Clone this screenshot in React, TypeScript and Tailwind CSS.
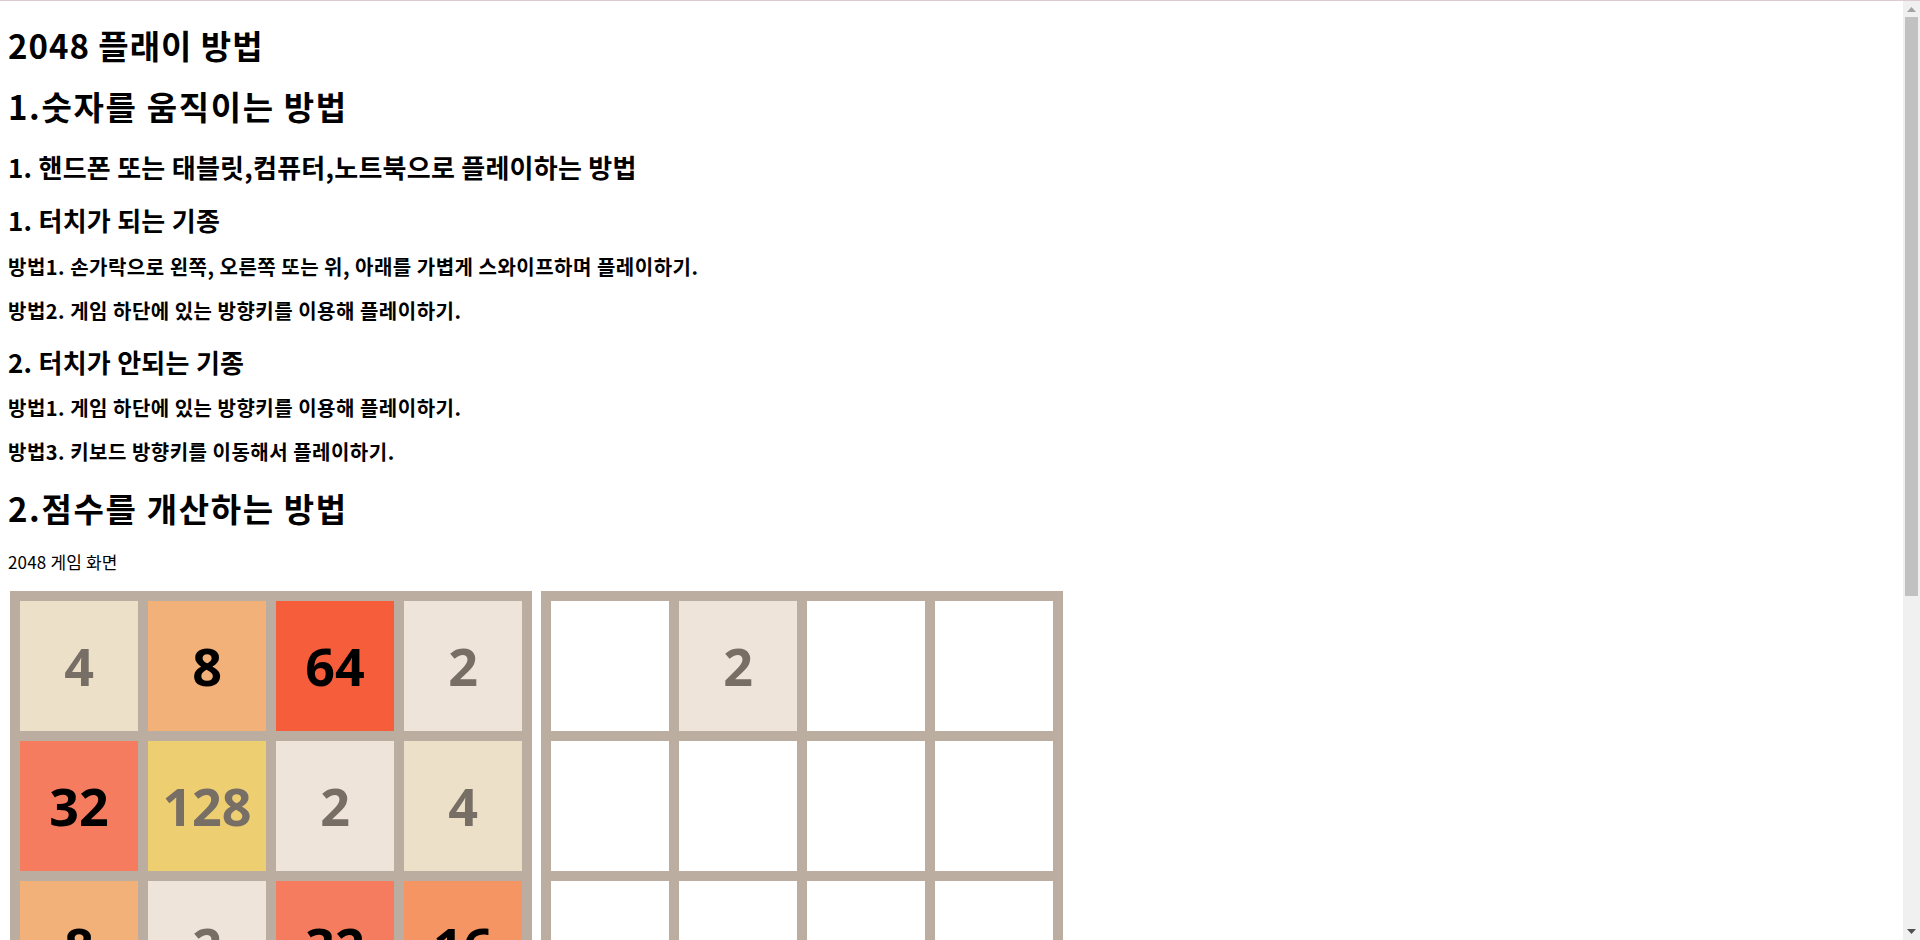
const board1 = [
  [4, 8, 64, 2],
  [32, 128, 2, 4],
  [8, 2, 32, 16],
  [2, 4, 8, 2],
];

const board2 = [
  [0, 2, 0, 0],
  [0, 0, 0, 0],
  [0, 0, 0, 0],
  [0, 0, 0, 0],
];

const tileStyles: Record<number, string> = {
  0: 'bg-white',
  2: 'bg-[#eee4da] text-[#776e65]',
  4: 'bg-[#ede0c8] text-[#776e65]',
  8: 'bg-[#f2b179] text-black',
  16: 'bg-[#f59563] text-black',
  32: 'bg-[#f67c5f] text-black',
  64: 'bg-[#f65e3b] text-black',
  128: 'bg-[#edcf72] text-[#776e65]',
};

function Board({ cells }: { cells: number[][] }) {
  return (
    <div className="grid grid-cols-[repeat(4,118px)] grid-rows-[repeat(4,130px)] gap-[10px] bg-[#bbada0] p-[10px]">
      {cells.flat().map((v, i) => (
        <div
          key={i}
          className={`flex items-center justify-center font-['Open_Sans',sans-serif] text-[52px] font-bold ${tileStyles[v]}`}
        >
          {v > 0 ? v : ''}
        </div>
      ))}
    </div>
  );
}

// classic window scrollbar, page scrolled to the top
function Scrollbar() {
  return (
    <div className="fixed right-0 top-0 flex h-screen w-[17px] flex-col border-t border-[#dccbd3] bg-[#f0f0f0]">
      <div className="flex h-[16px] items-center justify-center">
        <svg width="9" height="5" viewBox="0 0 9 5">
          <path d="M4.5 0 L9 5 H0 Z" fill="#a3a3a3" />
        </svg>
      </div>
      <div className="flex-1 px-[2px]">
        <div className="h-[579px] bg-[#c1c1c1]" />
      </div>
      <div className="flex h-[17px] items-center justify-center">
        <svg width="9" height="5" viewBox="0 0 9 5">
          <path d="M0 0 H9 L4.5 5 Z" fill="#505050" />
        </svg>
      </div>
    </div>
  );
}

export default function App() {
  return (
    <div className="min-h-[1471px] border-t border-[#dccbd3] bg-white">
      <div className="flex flex-col px-2 font-['Noto_Sans_CJK_KR',sans-serif] text-black">
        <h1 className="mt-[24px] text-[33px] font-bold leading-[40px] tracking-[0.03em]">2048 플래이 방법</h1>
        <h1 className="mt-[21px] text-[33px] font-bold leading-[40px] tracking-[0.05em]">1.숫자를 움직이는 방법</h1>
        <h2 className="mt-[25px] text-[26px] font-bold leading-[32px] tracking-[0.01em]">
          1. 핸드폰 또는 태블릿,컴퓨터,노트북으로 플레이하는 방법
        </h2>
        <h2 className="mt-[21px] text-[26px] font-bold leading-[32px] tracking-[0.01em]">1. 터치가 되는 기종</h2>
        <p className="mt-[18px] text-[20px] font-bold leading-[26px] tracking-[0.025em]">
          방법1. 손가락으로 왼쪽, 오른쪽 또는 위, 아래를 가볍게 스와이프하며 플레이하기.
        </p>
        <p className="mt-[18px] text-[20px] font-bold leading-[26px] tracking-[0.025em]">
          방법2. 게임 하단에 있는 방향키를 이용해 플레이하기.
        </p>
        <h2 className="mt-[22px] text-[26px] font-bold leading-[32px] tracking-[0.01em]">2. 터치가 안되는 기종</h2>
        <p className="mt-[17px] text-[20px] font-bold leading-[26px] tracking-[0.025em]">
          방법1. 게임 하단에 있는 방향키를 이용해 플레이하기.
        </p>
        <p className="mt-[18px] text-[20px] font-bold leading-[26px] tracking-[0.025em]">
          방법3. 키보드 방향키를 이동해서 플레이하기.
        </p>
        <h1 className="mt-[23px] text-[33px] font-bold leading-[40px] tracking-[0.05em]">2.점수를 개산하는 방법</h1>
        <p className="mt-[24px] text-[17px] leading-[20px] tracking-[0.01em]">2048 게임 화면</p>
        <div className="ml-[2px] mt-[19px] flex gap-[9px] pb-[300px]">
          <Board cells={board1} />
          <Board cells={board2} />
        </div>
      </div>
      <Scrollbar />
    </div>
  );
}
